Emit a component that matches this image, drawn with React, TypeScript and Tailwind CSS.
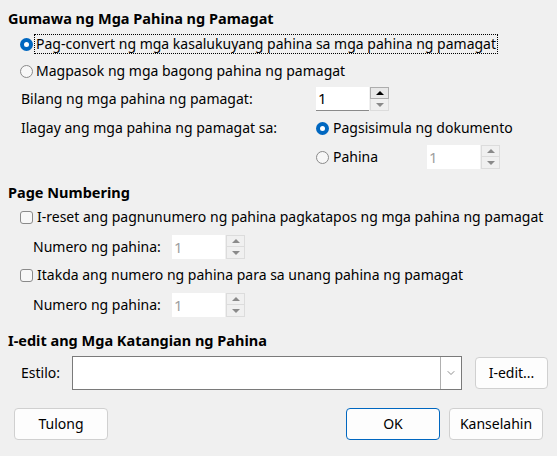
import { ChevronDown } from "lucide-react";

const font = { fontFamily: '"Noto Sans", "Open Sans", sans-serif' };

function Radio({ checked }: { checked?: boolean }) {
  return checked ? (
    <span className="w-[13px] h-[13px] rounded-full bg-[#0067c0] flex items-center justify-center shrink-0">
      <span className="w-[5px] h-[5px] rounded-full bg-white" />
    </span>
  ) : (
    <span className="w-[13px] h-[13px] rounded-full border border-[#8a8a8a] bg-[#f7f7f7] shrink-0" />
  );
}

function Checkbox() {
  return <span className="w-[13px] h-[13px] rounded-[3px] border border-[#8a8a8a] bg-[#f7f7f7] shrink-0" />;
}

function Spin({ disabled }: { disabled?: boolean }) {
  return (
    <div className="flex h-[24px] shrink-0">
      <div
        className={
          "w-[53px] h-full bg-white flex items-center pl-[2px] text-[15px] " +
          (disabled ? "text-[#a0a0a0]" : "text-black border-b border-[#8a8a8a]")
        }
      >
        1
      </div>
      <div className="w-[19px] flex flex-col ml-[1px]">
        <div
          className={
            "h-[12px] border flex items-center justify-center " +
            (disabled ? "border-[#dcdcdc] bg-[#f0f0f0]" : "border-[#adadad] bg-[#e8e8e8]")
          }
        >
          <span
            className={
              "w-0 h-0 border-l-[4px] border-r-[4px] border-b-[4px] border-l-transparent border-r-transparent " +
              (disabled ? "border-b-[#8a8a8a]" : "border-b-black")
            }
          />
        </div>
        <div className="h-[12px] border border-t-0 border-[#dcdcdc] bg-[#f0f0f0] flex items-center justify-center">
          <span className="w-0 h-0 border-l-[4px] border-r-[4px] border-t-[4px] border-l-transparent border-r-transparent border-t-[#8a8a8a]" />
        </div>
      </div>
    </div>
  );
}

function Button({ children, primary, wide = true }: { children: React.ReactNode; primary?: boolean; wide?: boolean }) {
  return (
    <button
      className={
        "h-[32px] rounded-[4px] bg-[#fdfdfd] text-[14px] text-black flex items-center justify-center border shrink-0 " +
        (wide ? "w-[94px] " : "w-[73px] ") +
        (primary ? "border-[#0067c0]" : "border-[#d0d0d0]")
      }
    >
      {children}
    </button>
  );
}

export default function App() {
  return (
    <div
      className="w-[557px] h-[456px] bg-[#f0f0f0] text-black text-[14px] leading-none whitespace-nowrap overflow-hidden pt-[8px]"
      style={font}
    >
      {/* Section 1 */}
      <div className="h-[20px] flex items-center pl-[8px] font-bold text-[14.5px]">Gumawa ng Mga Pahina ng Pamagat</div>

      <div className="h-[20px] mt-[6px] flex items-center pl-[20px]">
        <Radio checked />
        <span className="ml-[1px] h-[20px] flex items-center px-[1px] border border-dotted border-black">
          Pag-convert ng mga kasalukuyang pahina sa mga pahina ng pamagat
        </span>
      </div>

      <div className="h-[20px] mt-[7px] flex items-center pl-[20px] gap-[3px]">
        <Radio />
        <span>Magpasok ng mga bagong pahina ng pamagat</span>
      </div>

      <div className="h-[24px] mt-[6px] flex items-center pl-[21px]">
        <span className="w-[295px]">Bilang ng mga pahina ng pamagat:</span>
        <Spin />
      </div>

      <div className="h-[20px] mt-[7px] flex items-center pl-[21px]">
        <span className="w-[295px]">Ilagay ang mga pahina ng pamagat sa:</span>
        <Radio checked />
        <span className="ml-[4px]">Pagsisimula ng dokumento</span>
      </div>

      <div className="h-[24px] mt-[7px] flex items-center pl-[316px]">
        <Radio />
        <span className="ml-[4px] w-[94px]">Pahina</span>
        <Spin disabled />
      </div>

      {/* Section 2 */}
      <div className="h-[20px] mt-[13px] flex items-center pl-[8px] font-bold text-[14.5px]">Page Numbering</div>

      <div className="h-[20px] mt-[5px] flex items-center pl-[20px] gap-[4px]">
        <Checkbox />
        <span>I-reset ang pagnunumero ng pahina pagkatapos ng mga pahina ng pamagat</span>
      </div>

      <div className="h-[24px] mt-[8px] flex items-center pl-[33px]">
        <span className="w-[139px]">Numero ng pahina:</span>
        <Spin disabled />
      </div>

      <div className="h-[20px] mt-[6px] flex items-center pl-[20px] gap-[4px]">
        <Checkbox />
        <span>Itakda ang numero ng pahina para sa unang pahina ng pamagat</span>
      </div>

      <div className="h-[24px] mt-[8px] flex items-center pl-[33px]">
        <span className="w-[139px]">Numero ng pahina:</span>
        <Spin disabled />
      </div>

      {/* Section 3 */}
      <div className="h-[20px] mt-[13px] flex items-center pl-[8px] font-bold text-[14.5px]">
        I-edit ang Mga Katangian ng Pahina
      </div>

      <div className="h-[34px] mt-[6px] flex items-center pl-[21px]">
        <span className="w-[51px]">Estilo:</span>
        <div className="w-[390px] h-[34px] bg-white border border-[#7a7a7a] flex justify-end shrink-0">
          <div className="w-[21px] h-full border-l border-[#b0b0b0] flex items-center justify-center text-[#6a6a6a]">
            <ChevronDown size={12} strokeWidth={1.5} />
          </div>
        </div>
        <div className="ml-[13px]">
          <Button wide={false}>I-edit...</Button>
        </div>
      </div>

      <div className="mt-[18px] flex items-center px-[14px]">
        <Button>Tulong</Button>
        <div className="flex-1" />
        <Button primary>OK</Button>
        <div className="ml-[9px]">
          <Button>Kanselahin</Button>
        </div>
      </div>
    </div>
  );
}
